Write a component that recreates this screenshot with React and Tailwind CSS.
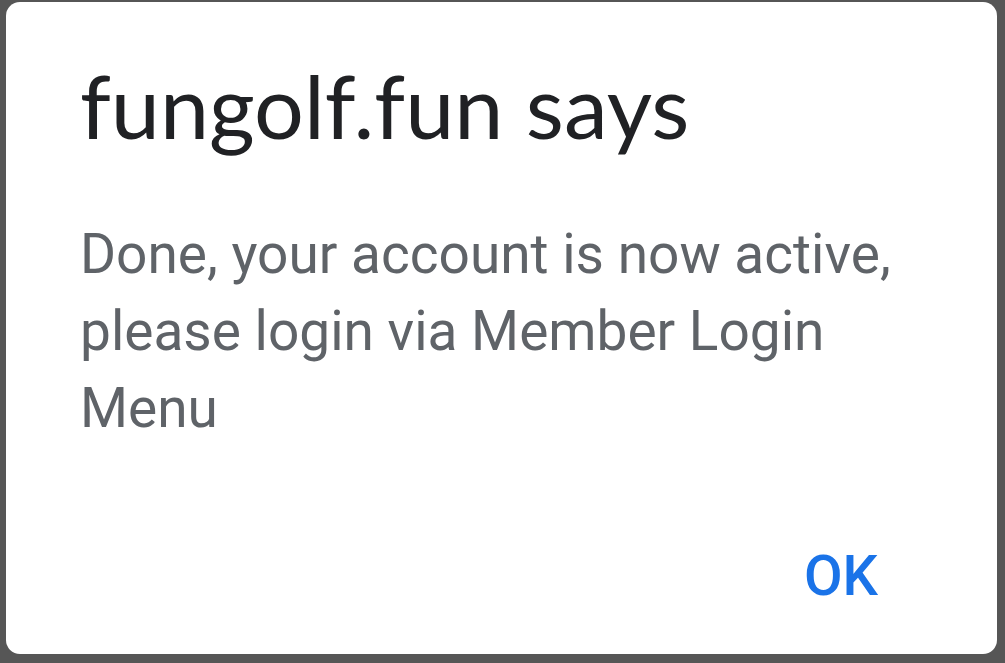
export default function App() {
  return (
    <div className="h-[663px] w-[1005px] bg-[#565656] pt-[2px] pl-[6px] pr-[8px] pb-[9px]">
      <div className="flex h-full w-full flex-col rounded-[14px] bg-white px-[74px]">
        <h1 className="mt-[53px] text-[88px] leading-[100px] text-[#202124] font-['Lato',sans-serif]">
          fungolf.fun says
        </h1>
        <p className="mt-[61px] text-[55px] leading-[77px] text-[#5f6368] font-['Roboto',sans-serif]">
          Done, your account is now active, please login via Member Login Menu
        </p>
        <div className="mt-auto mb-[43px] flex justify-end">
          <button className="pl-[40px] pr-[45px] text-[56px] font-medium leading-[70px] text-[#1a73e8] font-['Roboto',sans-serif]">
            OK
          </button>
        </div>
      </div>
    </div>
  )
}
